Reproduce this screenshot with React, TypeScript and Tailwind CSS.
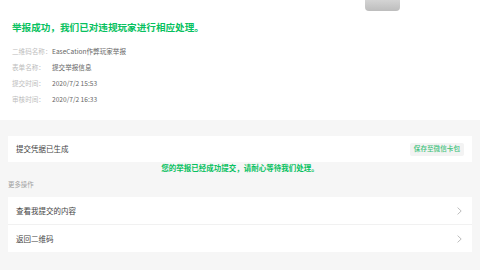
import React from 'react';

const info = [
  { label: '二维码名称：', value: 'EaseCation作弊玩家举报' },
  { label: '表单名称：', value: '提交举报信息' },
  { label: '提交时间：', value: '2020/7/2 15:53' },
  { label: '审核时间：', value: '2020/7/2 16:33' },
];

function Chevron() {
  return (
    <svg width="5" height="8" viewBox="0 0 5 8" fill="none">
      <polyline points="0.6,0.6 4.2,4 0.6,7.4" stroke="#b5b5b5" strokeWidth="0.9" />
    </svg>
  );
}

export default function App() {
  return (
    <div
      className="relative w-[480px] h-[270px] overflow-hidden bg-[#f6f6f6]"
      style={{ fontFamily: '"Noto Sans CJK SC", "Noto Sans", sans-serif' }}
    >
      <div className="absolute left-[365px] top-0 w-[35px] h-[11px] rounded-b-[4px] bg-gradient-to-b from-[#d4d4d4] to-[#bdbdbd]" />

      <div className="bg-white px-[12px] pt-[21px] pb-[12px]">
        <h1 className="text-[9.6px] leading-[12px] font-semibold text-[#07c160]">
          举报成功，我们已对违规玩家进行相应处理。
        </h1>
        <div className="mt-[11px] flex flex-col">
          {info.map((row) => (
            <div key={row.label} className="flex h-[16px] items-center text-[6.6px]">
              <span className="w-[40px] text-[#bdbdbd]">{row.label}</span>
              <span className="text-[#666]">{row.value}</span>
            </div>
          ))}
        </div>
      </div>

      <div className="px-[8px] pt-[16px]">
        <div className="flex h-[26px] items-center justify-between bg-white pl-[8px] pr-[8px]">
          <span className="text-[7.5px] text-[#444]">提交凭据已生成</span>
          <span className="flex h-[13px] items-center rounded-[2px] bg-[#f3f3f3] px-[4px] text-[6.6px] font-medium text-[#3cc27a]">
            保存至微信卡包
          </span>
        </div>
        <p className="h-[12px] text-center text-[7.5px] leading-[12px] font-semibold text-[#07c160]">
          您的举报已经成功提交，请耐心等待我们处理。
        </p>
        <p className="mt-[6px] h-[10px] text-[6.4px] leading-[10px] text-[#a0a0a0]">更多操作</p>
        <div className="mt-[7px] bg-white">
          <div className="flex h-[28px] items-center justify-between border-b border-[#f1f1f1] pl-[8px] pr-[10px]">
            <span className="text-[7.5px] text-[#444]">查看我提交的内容</span>
            <Chevron />
          </div>
          <div className="flex h-[27px] items-center justify-between pl-[8px] pr-[10px]">
            <span className="text-[7.5px] text-[#444]">返回二维码</span>
            <Chevron />
          </div>
        </div>
      </div>
    </div>
  );
}
